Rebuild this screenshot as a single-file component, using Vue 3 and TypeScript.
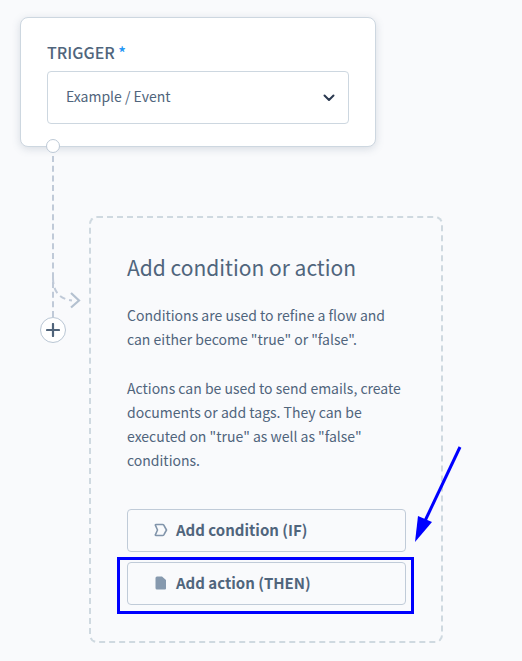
<script setup lang="ts">
import { ref } from 'vue'

const events = ['Example / Event']
const trigger = ref<string>(events[0])
</script>

<template>
  <main class="flow">
    <section class="trigger-card">
      <label class="trigger-label" for="trigger">TRIGGER <span class="required">*</span></label>
      <div class="select-wrap">
        <select id="trigger" v-model="trigger" class="select" required>
          <option v-for="event in events" :key="event" :value="event">{{ event }}</option>
        </select>
        <svg class="chevron" viewBox="0 0 14 10" aria-hidden="true">
          <path d="M2.500 2.500 7 7l4.500-4.500" fill="none" stroke="#2b3950" stroke-width="2" stroke-linecap="round" stroke-linejoin="round" />
        </svg>
      </div>
      <span class="port"></span>
    </section>

    <div class="branch">
      <div class="rail">
        <div class="line"></div>
        <button class="plus" type="button" aria-label="Add step">
          <svg viewBox="0 0 14 14" aria-hidden="true">
            <path d="M7 1v12M1 7h12" stroke="#50647a" stroke-width="2.200" stroke-linecap="round" />
          </svg>
        </button>
        <svg class="turn" viewBox="0 0 32 34" aria-hidden="true">
          <path d="M2 0C2 13 8 21 21 22.500" fill="none" stroke="#c0cad8" stroke-width="2" stroke-dasharray="6 4" />
          <path d="M20 15l8 7.500-8 7" fill="none" stroke="#b4c1d0" stroke-width="2.200" />
        </svg>
      </div>

      <section class="panel">
        <h1>Add condition or action</h1>
        <p>Conditions are used to refine a flow and can either become "true" or "false".</p>
        <p>Actions can be used to send emails, create documents or add tags. They can be executed on "true" as well as "false" conditions.</p>
        <div class="actions">
          <button class="choice" type="button">
            <svg viewBox="0 0 14 14" aria-hidden="true">
              <path d="M2 1.500h6.500c.6 0 1 .2 1.300.7L12.500 7l-2.700 4.800c-.3.500-.7.700-1.300.7H2c-.7 0-.8-.5-.5-1L3.500 7 1.500 2.500c-.3-.5-.2-1 .5-1z" fill="none" stroke="#8194aa" stroke-width="1.600" stroke-linejoin="round" />
            </svg>
            Add condition (IF)
          </button>
          <div class="highlighted">
            <button class="choice" type="button">
              <svg viewBox="0 0 14 14" aria-hidden="true">
                <path d="M3 .5h5l4 3.500v8.500a1 1 0 0 1-1 1H3a1.500 1.500 0 0 1-1.500-1.500V2A1.500 1.500 0 0 1 3 .5z" fill="#8699ae" />
              </svg>
              Add action (THEN)
            </button>
            <svg class="pointer" viewBox="0 0 50 100" aria-hidden="true">
              <path d="M47 3 11 79" stroke="#00f" stroke-width="3" />
              <path d="M2 98 5 72l14 6z" fill="#00f" />
            </svg>
          </div>
        </div>
      </section>
    </div>
  </main>
</template>

<style>
body {
  margin: 0;
  background: #f9fafc;
}
</style>

<style scoped>
.flow {
  box-sizing: border-box;
  padding: 17px 20px 18px;
  color: #50657c;
  font-family: "Noto Sans CJK SC", "Noto Sans", sans-serif;
  font-size: 14px;
  line-height: 24px;
}

.trigger-card {
  position: relative;
  box-sizing: border-box;
  max-width: 356px;
  padding: 22px 26px;
  border: 1px solid #cdd7e0;
  border-radius: 8px;
  background: #fff;
  box-shadow: 0 2px 8px rgba(80, 100, 125, 0.2);
}

.trigger-label {
  display: block;
  margin-bottom: 7px;
  font-size: 16px;
  font-weight: 500;
}

.required {
  color: #1e96f5;
}

.select-wrap {
  position: relative;
}

.select {
  display: block;
  box-sizing: border-box;
  width: 100%;
  height: 53px;
  padding: 0 40px 3px 18px;
  border: 1px solid #cdd7e0;
  border-radius: 4px;
  background: #fff;
  color: inherit;
  font: inherit;
  appearance: none;
}

.chevron {
  position: absolute;
  top: 22px;
  right: 13px;
  width: 14px;
  height: 10px;
  pointer-events: none;
}

.port {
  position: absolute;
  bottom: -7px;
  left: 25px;
  box-sizing: border-box;
  width: 14px;
  height: 14px;
  border: 1px solid #bdc9d6;
  border-radius: 50%;
  background: #fff;
}

.branch {
  display: flex;
  align-items: flex-start;
}

.rail {
  position: relative;
  display: flex;
  flex: 0 0 69px;
  flex-direction: column;
  align-items: flex-start;
}

.line {
  height: 161px;
  margin-top: 9px;
  margin-left: 32px;
  border-left: 2px dashed #c0cad8;
}

.plus {
  display: flex;
  align-items: center;
  justify-content: center;
  box-sizing: border-box;
  width: 26px;
  height: 26px;
  margin-left: 20px;
  padding: 0;
  border: 1px solid #b9c6d4;
  border-radius: 50%;
  background: #fff;
}

.plus svg {
  width: 14px;
  height: 14px;
}

.turn {
  position: absolute;
  top: 131px;
  left: 31px;
  width: 32px;
  height: 34px;
}

.panel {
  box-sizing: border-box;
  flex: 0 1 354px;
  min-width: 0;
  margin-top: 69px;
  padding: 33px 35px 36px 36px;
  border: 2px dashed #cfd9e0;
  border-radius: 8px;
}

h1 {
  margin: 0 0 20px;
  font-size: 21px;
  font-weight: 400;
  line-height: 32px;
}

p {
  margin: 0 0 25px;
}

.actions {
  display: grid;
  gap: 10px;
  margin-top: 37px;
}

.choice {
  display: flex;
  gap: 8px;
  align-items: center;
  box-sizing: border-box;
  width: 100%;
  height: 43px;
  padding: 0 26px 2px;
  border: 1px solid #c0cbd8;
  border-radius: 4px;
  background: transparent;
  color: inherit;
  font: inherit;
  font-size: 15px;
  font-weight: 700;
}

.choice svg {
  width: 14px;
  height: 14px;
}

.highlighted {
  position: relative;
}

.highlighted::after {
  position: absolute;
  inset: -5px -8px -9px -10px;
  border: 3px solid #00f;
  content: "";
  pointer-events: none;
}

.pointer {
  position: absolute;
  right: -57px;
  bottom: 61px;
  width: 50px;
  height: 100px;
  pointer-events: none;
}
</style>
